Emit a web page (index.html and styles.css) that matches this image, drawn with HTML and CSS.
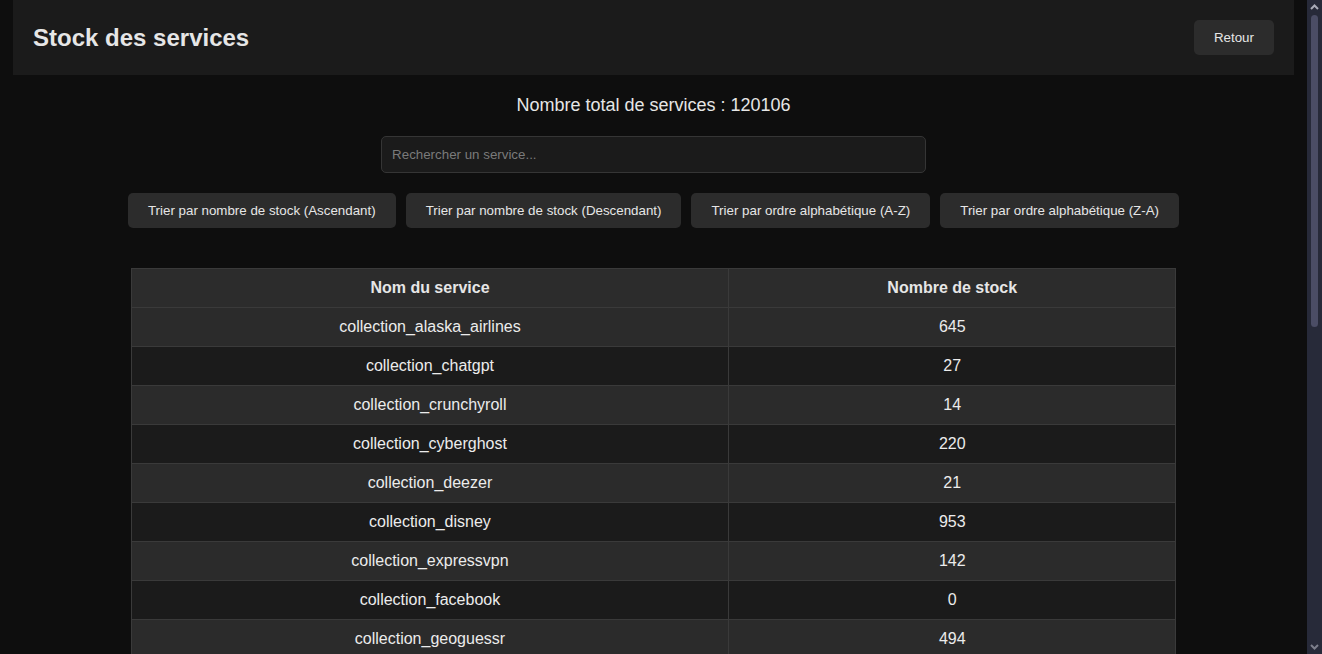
FILE: index.html
```html
<!DOCTYPE html>
<html lang="fr">
<head>
<meta charset="utf-8">
<title>Stock des services</title>
<link rel="stylesheet" href="styles.css">
</head>
<body>
<div class="page">
  <header class="topbar">
    <h1 class="title">Stock des services</h1>
    <button class="btn">Retour</button>
  </header>
  <main class="content">
    <h2 class="total">Nombre total de services : 120106</h2>
    <input class="search" type="text" placeholder="Rechercher un service...">
    <div class="sorts">
      <button class="btn">Trier par nombre de stock (Ascendant)</button>
      <button class="btn">Trier par nombre de stock (Descendant)</button>
      <button class="btn">Trier par ordre alphabétique (A-Z)</button>
      <button class="btn">Trier par ordre alphabétique (Z-A)</button>
    </div>
    <table class="stock">
      <thead>
        <tr><th class="col-name">Nom du service</th><th>Nombre de stock</th></tr>
      </thead>
      <tbody>
        <tr><td>collection_alaska_airlines</td><td>645</td></tr>
        <tr><td>collection_chatgpt</td><td>27</td></tr>
        <tr><td>collection_crunchyroll</td><td>14</td></tr>
        <tr><td>collection_cyberghost</td><td>220</td></tr>
        <tr><td>collection_deezer</td><td>21</td></tr>
        <tr><td>collection_disney</td><td>953</td></tr>
        <tr><td>collection_expressvpn</td><td>142</td></tr>
        <tr><td>collection_facebook</td><td>0</td></tr>
        <tr><td>collection_geoguessr</td><td>494</td></tr>
        <tr><td>collection_hbo_max</td><td>318</td></tr>
        <tr><td>collection_hulu</td><td>76</td></tr>
        <tr><td>collection_instagram</td><td>1204</td></tr>
        <tr><td>collection_minecraft</td><td>2310</td></tr>
        <tr><td>collection_netflix</td><td>5872</td></tr>
        <tr><td>collection_nordvpn</td><td>431</td></tr>
        <tr><td>collection_paramount</td><td>58</td></tr>
      </tbody>
    </table>
  </main>
</div>
<div class="scrollbar" aria-hidden="true">
  <svg class="arrow" width="15" height="14" viewBox="0 0 15 14"><path d="M4 9 L7.5 5.5 L11 9" fill="none" stroke="#a9abb8" stroke-width="2"/></svg>
  <div class="track"><div class="thumb"></div></div>
  <svg class="arrow" width="15" height="14" viewBox="0 0 15 14"><path d="M4 5 L7.5 8.5 L11 5" fill="none" stroke="#7d7f8c" stroke-width="2"/></svg>
</div>
</body>
</html>
```

FILE: styles.css
```css
html, body {
  height: 100%;
}
body {
  margin: 0;
  display: flex;
  overflow: hidden;
  background: #0e0e0e;
  color: #e6e6e6;
  font-family: "Liberation Sans", Arial, sans-serif;
}
.page {
  flex: 1;
  min-width: 0;
  overflow: hidden;
}
.scrollbar {
  width: 15px;
  flex: none;
  display: flex;
  flex-direction: column;
  background: #272a39;
}
.arrow {
  display: block;
  flex: none;
}
.track {
  flex: 1;
  padding: 1px 4px 0;
}
.thumb {
  height: 312px;
  background: #4b4d65;
  border-radius: 4px;
}
.topbar {
  width: 98%;
  margin: 0 auto;
  box-sizing: border-box;
  background: #1b1b1b;
  padding: 20px;
  display: flex;
  align-items: center;
  justify-content: space-between;
}
.title {
  margin: 0;
  font-size: 24px;
  font-weight: bold;
  color: #e6e6e6;
}
.btn {
  background: #2c2c2c;
  color: #e6e6e6;
  border: none;
  border-radius: 5px;
  padding: 10px 20px;
  font-family: "Liberation Sans", Arial, sans-serif;
  font-size: 13.333px;
  line-height: 15px;
  cursor: pointer;
}
.content {
  display: flex;
  flex-direction: column;
  align-items: center;
}
.total {
  margin: 20px 0 20px;
  font-size: 18px;
  font-weight: normal;
  line-height: 21px;
  color: #e6e6e6;
}
.search {
  width: 40%;
  padding: 10px;
  border: 1px solid #353535;
  border-radius: 5px;
  background: #1b1b1b;
  color: #e6e6e6;
  font-family: "Liberation Sans", Arial, sans-serif;
  font-size: 13.333px;
  line-height: 15px;
  outline: none;
}
.search::placeholder {
  color: #7a7a7a;
}
.sorts {
  display: flex;
  gap: 10px;
  margin: 20px 0;
}
.stock {
  width: 80%;
  margin: 20px auto;
  border-collapse: collapse;
  font-size: 16px;
}
.stock th,
.stock td {
  padding: 10px;
  border: 1px solid #3a3a3a;
  text-align: center;
  line-height: 18px;
}
.stock th {
  background: #2c2c2c;
  font-weight: bold;
  color: #e6e6e6;
}
.col-name {
  width: 57.2%;
}
.stock tbody tr:nth-child(odd) {
  background: #2b2b2b;
}
.stock tbody tr:nth-child(even) {
  background: #1b1b1b;
}
.stock td {
  color: #ececec;
}
```
